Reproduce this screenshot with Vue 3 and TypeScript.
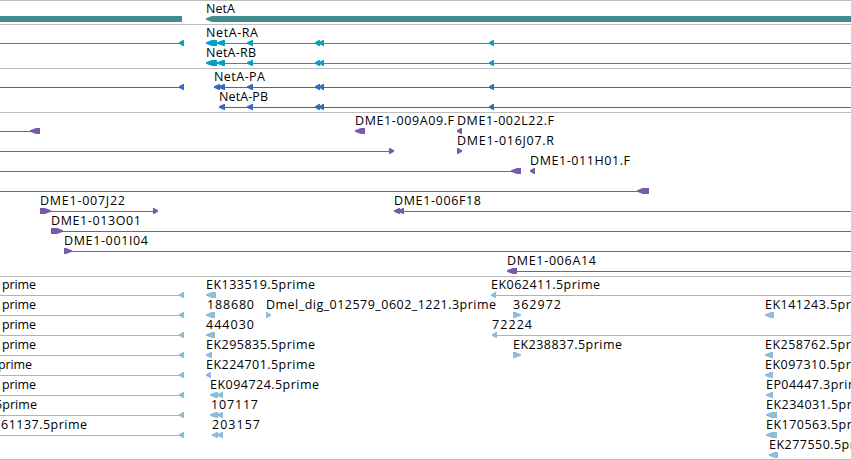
<script setup lang="ts">
interface Glyph {
  from: number
  to: number
  dir: 'left' | 'right' | 'none'
}
interface Label {
  text: string
  x: number
  width: number
}
interface Row {
  labels: Label[]
  lines: [number, number][]
  glyphs: Glyph[]
}
interface Track {
  name: string
  color: string
  rows: Row[]
}

const END = 851

const left = (from: number, to: number): Glyph => ({ from, to, dir: 'left' })
const right = (from: number, to: number): Glyph => ({ from, to, dir: 'right' })
const label = (text: string, x: number, width: number): Label => ({ text, x, width })
const row = (labels: Label[], lines: [number, number][], glyphs: Glyph[]): Row => ({ labels, lines, glyphs })

const exons = [left(247, 253), left(315, 320), left(319, 324), left(489, 494)]
const upstream = left(179, 184)

const tracks: Track[] = [
  {
    name: 'gene',
    color: '#408c91',
    rows: [row([label('NetA', 206, 29)], [], [{ from: 0, to: 182, dir: 'none' }, left(206, END)])],
  },
  {
    name: 'transcript',
    color: '#05a0c0',
    rows: [
      row([label('NetA-RA', 206, 52)], [[0, 180], [210, END]], [upstream, left(206, 217), left(217, 225), ...exons]),
      row([label('NetA-RB', 206, 50)], [[210, END]], [left(206, 217), left(217, 225), ...exons]),
    ],
  },
  {
    name: 'protein',
    color: '#326ac8',
    rows: [
      row([label('NetA-PA', 214, 51)], [[0, 180], [216, END]], [upstream, left(214, 220), left(218, 225), ...exons]),
      row([label('NetA-PB', 219, 49)], [[222, END]], [left(219, 225), ...exons]),
    ],
  },
  {
    name: 'clone',
    color: '#785aaa',
    rows: [
      row([label('DME1-009A09.F', 355, 99), label('DME1-002L22.F', 457, 97)], [[0, 32]], [left(30, 40), left(355, 365), left(457, 462)]),
      row([label('DME1-016J07.R', 457, 97)], [[0, 390]], [right(389, 394), right(457, 462)]),
      row([label('DME1-011H01.F', 530, 100)], [[0, 513]], [left(511, 521), left(530, 535)]),
      row([], [[0, 639]], [left(637, 649)]),
      row([label('DME1-007J22', 40, 85), label('DME1-006F18', 394, 87)], [[48, 154], [400, END]], [right(40, 51), right(153, 158), left(394, 400), left(398, 404)]),
      row([label('DME1-013O01', 51, 90)], [[60, END]], [right(51, 63)]),
      row([label('DME1-001I04', 64, 84)], [[69, END]], [right(64, 72)]),
      row([label('DME1-006A14', 507, 89)], [[514, END]], [left(507, 517)]),
    ],
  },
  {
    name: 'insertion',
    color: '#8cbedc',
    rows: [
      row([label('prime', 2, 34), label('EK133519.5prime', 206, 109), label('EK062411.5prime', 491, 109)], [[0, 180], [494, END]], [upstream, left(206, 216), left(491, 496)]),
      row([label('prime', 2, 34), label('188680', 207, 47), label('Dmel_dig_012579_0602_1221.3prime', 266, 230), label('362972', 513, 48), label('EK141243.5prime', 765, 109)], [[0, 180]], [upstream, left(206, 215), right(266, 271), right(513, 521), left(765, 774)]),
      row([label('prime', 2, 34), label('444030', 206, 48), label('72224', 492, 40)], [[0, 180], [494, END]], [upstream, left(206, 215), left(492, 497)]),
      row([label('prime', 2, 34), label('EK295835.5prime', 206, 109), label('EK238837.5prime', 513, 109), label('EK258762.5prime', 765, 109)], [[0, 180]], [upstream, left(206, 212), right(513, 521), left(765, 773)]),
      row([label('prime', -2, 34), label('EK224701.5prime', 206, 109), label('EK097310.5prime', 765, 109)], [[0, 180]], [upstream, left(206, 211), left(765, 773)]),
      row([label('prime', 2, 34), label('EK094724.5prime', 210, 109), label('EP04447.3prime', 766, 101)], [[0, 180]], [upstream, left(210, 218), left(217, 223), left(766, 773)]),
      row([label('5prime', -5, 42), label('107117', 211, 47), label('EK234031.5prime', 766, 109)], [[0, 180]], [upstream, left(210, 218), left(217, 223), left(766, 777)]),
      row([label('61137.5prime', 1, 86), label('203157', 212, 48), label('EK170563.5prime', 766, 109)], [[0, 180]], [upstream, left(212, 218), left(217, 223), left(766, 777)]),
      row([label('EK277550.5prime', 769, 109)], [], [left(769, 778)]),
    ],
  },
]

function shape(g: Glyph): string {
  if (g.dir === 'none') {
    return `${g.from},14 ${g.to},14 ${g.to},20 ${g.from},20`
  }
  const head = Math.min(6, g.to - g.from - 1)
  const tip = g.dir === 'left' ? g.from : g.to
  const tail = g.dir === 'left' ? g.to : g.from
  const neck = g.dir === 'left' ? tip + head : tip - head
  return `${tip},16.2 ${neck},14 ${tail},14 ${tail},20 ${neck},20 ${tip},17.8`
}
</script>

<template>
  <main class="browser">
    <section v-for="track in tracks" :key="track.name" class="track">
      <svg v-for="(r, i) in track.rows" :key="i" class="row" width="851" height="20" :fill="track.color">
        <rect v-for="(l, j) in r.lines" :key="'l' + j" :x="l[0]" y="17" :width="l[1] - l[0]" height="1" />
        <polygon v-for="(g, j) in r.glyphs" :key="'g' + j" :points="shape(g)" />
        <text
          v-for="(t, j) in r.labels"
          :key="'t' + j"
          class="label"
          :x="t.x"
          y="11"
          :textLength="t.width"
          lengthAdjust="spacing"
        >{{ t.text }}</text>
      </svg>
    </section>
  </main>
</template>

<style>
body {
  margin: 0;
  background: #fff;
}
</style>

<style scoped>
.browser {
  display: flex;
  flex-direction: column;
  width: 851px;
  height: 460px;
  box-sizing: border-box;
  border-bottom: 1px solid #bebebe;
  overflow: hidden;
  background: #fff;
}
.track {
  display: flex;
  flex-direction: column;
  flex: none;
  border-top: 1px solid #bebebe;
  padding: 1px 0 2px;
}
.track:last-child {
  padding-bottom: 1px;
}
.row {
  display: block;
  flex: none;
  overflow: visible;
}
.label {
  font-family: "Open Sans", "Noto Sans", sans-serif;
  font-size: 12.5px;
  fill: #000;
}
</style>
